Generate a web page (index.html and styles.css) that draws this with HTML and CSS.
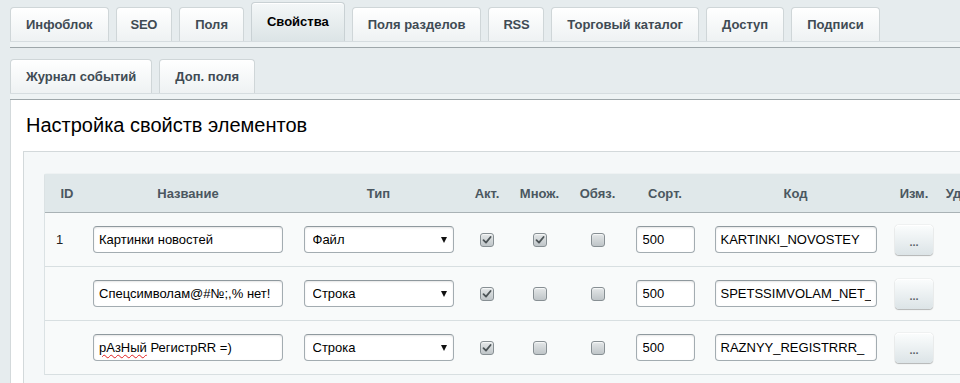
FILE: index.html
```html
<!DOCTYPE html>
<html lang="ru">
<head>
<meta charset="utf-8">
<title>Свойства</title>
<link rel="stylesheet" href="styles.css">
</head>
<body>
<div class="tabs tabs-first">
  <div class="tab">Инфоблок</div>
  <div class="tab tab-caps">SEO</div>
  <div class="tab">Поля</div>
  <div class="tab active">Свойства</div>
  <div class="tab">Поля разделов</div>
  <div class="tab tab-caps">RSS</div>
  <div class="tab">Торговый каталог</div>
  <div class="tab">Доступ</div>
  <div class="tab">Подписи</div>
</div>
<div class="tabs-band"></div>
<div class="tabs tabs-second">
  <div class="tab">Журнал событий</div>
  <div class="tab">Доп. поля</div>
</div>
<div class="tabs-band"></div>
<div class="panel">
  <h1 class="title">Настройка свойств элементов</h1>
  <div class="box">
    <table class="props">
      <colgroup>
        <col class="c-id"><col class="c-name"><col class="c-type"><col class="c-act"><col class="c-mult"><col class="c-req"><col class="c-sort"><col class="c-code"><col class="c-edit"><col class="c-del">
      </colgroup>
      <thead>
        <tr><th class="th-id">ID</th><th>Название</th><th>Тип</th><th>Акт.</th><th>Множ.</th><th>Обяз.</th><th>Сорт.</th><th>Код</th><th>Изм.</th><th>Удал.</th></tr>
      </thead>
      <tbody>
        <tr>
          <td class="td-id">1</td>
          <td><input class="inp inp-name" type="text" value="Картинки новостей"></td>
          <td><span class="sel-wrap"><select class="sel"><option>Файл</option></select></span></td>
          <td><span class="cb"><svg viewBox="0 0 14 14" width="14" height="14"><path d="M3.5 7.2 L6 9.6 L10.6 4" fill="none" stroke="#4d5457" stroke-width="1.8" stroke-linecap="round" stroke-linejoin="round"/></svg></span></td>
          <td><span class="cb"><svg viewBox="0 0 14 14" width="14" height="14"><path d="M3.5 7.2 L6 9.6 L10.6 4" fill="none" stroke="#4d5457" stroke-width="1.8" stroke-linecap="round" stroke-linejoin="round"/></svg></span></td>
          <td><span class="cb"></span></td>
          <td><input class="inp inp-sort" type="text" value="500"></td>
          <td><input class="inp inp-code" type="text" value="KARTINKI_NOVOSTEY"></td>
          <td><button class="btn" type="button">...</button></td>
          <td></td>
        </tr>
        <tr>
          <td class="td-id"></td>
          <td><input class="inp inp-name" type="text" value="Спецсимволам@#№;,% нет!"></td>
          <td><span class="sel-wrap"><select class="sel"><option>Строка</option></select></span></td>
          <td><span class="cb"><svg viewBox="0 0 14 14" width="14" height="14"><path d="M3.5 7.2 L6 9.6 L10.6 4" fill="none" stroke="#4d5457" stroke-width="1.8" stroke-linecap="round" stroke-linejoin="round"/></svg></span></td>
          <td><span class="cb"></span></td>
          <td><span class="cb"></span></td>
          <td><input class="inp inp-sort" type="text" value="500"></td>
          <td><input class="inp inp-code" type="text" value="SPETSSIMVOLAM_NET_"></td>
          <td><button class="btn" type="button">...</button></td>
          <td></td>
        </tr>
        <tr>
          <td class="td-id"></td>
          <td><span class="spell-wrap"><input class="inp inp-name" type="text" value="рАзНый РегистрRR =)"><span class="spell">рАзНый</span></span></td>
          <td><span class="sel-wrap"><select class="sel"><option>Строка</option></select></span></td>
          <td><span class="cb"><svg viewBox="0 0 14 14" width="14" height="14"><path d="M3.5 7.2 L6 9.6 L10.6 4" fill="none" stroke="#4d5457" stroke-width="1.8" stroke-linecap="round" stroke-linejoin="round"/></svg></span></td>
          <td><span class="cb"></span></td>
          <td><span class="cb"></span></td>
          <td><input class="inp inp-sort" type="text" value="500"></td>
          <td><input class="inp inp-code" type="text" value="RAZNYY_REGISTRRR_"></td>
          <td><button class="btn" type="button">...</button></td>
          <td></td>
        </tr>
      </tbody>
    </table>
  </div>
</div>
</body>
</html>
```

FILE: styles.css
```css
html {
  overflow: hidden;
}

body {
  margin: 0;
  width: 1200px;
  background: #e6ecee;
  font-family: "Liberation Sans", Arial, sans-serif;
  font-size: 13px;
  color: #000;
}

.tabs {
  display: flex;
  align-items: flex-end;
  gap: 7px;
  padding-left: 10px;
}

.tabs-first {
  height: 39px;
  padding-top: 2px;
}

.tabs-second {
  height: 34px;
  margin-top: 11px;
}

.tab {
  box-sizing: border-box;
  height: 34px;
  line-height: 33px;
  padding: 0 15px;
  border: 1px solid #cfd6d8;
  border-bottom: none;
  border-radius: 4px 4px 0 0;
  background: linear-gradient(#ffffff, #eef2f3);
  box-shadow: inset 0 1px 0 #fff;
  color: #3f4b54;
  font-weight: bold;
  font-size: 13px;
  white-space: nowrap;
}

.tab.tab-caps {
  padding: 0 14px;
  letter-spacing: -0.3px;
}

.tab.active {
  height: 39px;
  line-height: 37px;
  color: #000;
  background: linear-gradient(#f4f7f8, #dce4e6);
  border-color: #c9d1d4;
}

.tabs-band {
  margin-left: 10px;
  height: 5px;
  background: #eef3f4;
  border-top: 1px solid #d6dde0;
  border-bottom: 1px solid #9ea7aa;
}

.panel {
  margin-left: 10px;
  height: 400px;
  background: #fff;
  border-left: 1px solid #d3d9db;
  padding: 14px 0 0 12px;
}

.title {
  margin: 0 0 14px 3px;
  font-size: 20px;
  font-weight: normal;
  line-height: 23px;
  color: #000;
}

.box {
  border: 1px solid #d3d9db;
  background: #f5f8f9;
  padding: 21px 0 0 20px;
  height: 300px;
}

.props {
  border-collapse: separate;
  border-spacing: 0;
  table-layout: fixed;
  width: 941px;
  border-left: 1px solid #dbe2e4;
  border-top: 1px solid #eef2f3;
  border-radius: 3px 0 0 0;
}

.c-id { width: 38px; }
.c-name { width: 210px; }
.c-type { width: 171px; }
.c-act { width: 46px; }
.c-mult { width: 59px; }
.c-req { width: 57px; }
.c-sort { width: 78px; }
.c-code { width: 183px; }
.c-edit { width: 54px; }
.c-del { width: 44px; }

.props th {
  height: 38px;
  padding: 0;
  background: #e0e8ea;
  border-bottom: 1px solid #a9b2b5;
  color: #4b5760;
  font-weight: bold;
  font-size: 13px;
  text-align: center;
  white-space: nowrap;
}

.props th.th-id {
  padding-left: 6px;
}

.props td {
  height: 53px;
  padding: 0;
  background: #f8fafa;
  border-bottom: 1px solid #d8dfe1;
  text-align: center;
  vertical-align: middle;
}

.props td.td-id {
  text-align: left;
  padding-left: 11px;
  color: #222;
}

.inp {
  box-sizing: border-box;
  height: 27px;
  margin: 0;
  padding: 0 5px;
  border: 1px solid #a3acb1;
  border-top-color: #8f999e;
  border-radius: 4px;
  background: #fff;
  box-shadow: inset 0 1px 2px rgba(0, 0, 0, 0.1);
  font-family: "Liberation Sans", Arial, sans-serif;
  font-size: 13px;
  color: #000;
  vertical-align: middle;
  outline: none;
}

.inp-name { width: 190px; }
.inp-sort { width: 59px; padding-left: 6px; }
.inp-code { width: 162px; }

.spell-wrap {
  position: relative;
  display: inline-block;
  vertical-align: middle;
}

.spell {
  position: absolute;
  left: 6px;
  top: 0;
  height: 27px;
  line-height: 27px;
  font-size: 13px;
  color: transparent;
  text-decoration: underline wavy #e02020;
  text-decoration-thickness: 1px;
  text-underline-offset: 2px;
  pointer-events: none;
  white-space: nowrap;
}

.sel-wrap {
  position: relative;
  display: inline-block;
  vertical-align: middle;
}

.sel-wrap::after {
  content: "";
  position: absolute;
  right: 7px;
  top: 11px;
  border-style: solid;
  border-width: 6px 3.5px 0 3.5px;
  border-color: #111 transparent transparent transparent;
  pointer-events: none;
}

.sel {
  box-sizing: border-box;
  width: 150px;
  height: 27px;
  margin: 0;
  padding: 0 20px 0 8px;
  border: 1px solid #a3acb1;
  border-top-color: #8f999e;
  border-radius: 4px;
  background: #fff;
  box-shadow: inset 0 1px 2px rgba(0, 0, 0, 0.1);
  font-family: "Liberation Sans", Arial, sans-serif;
  font-size: 13px;
  color: #000;
  -webkit-appearance: none;
  appearance: none;
  vertical-align: middle;
}

.cb {
  box-sizing: border-box;
  display: inline-block;
  width: 14px;
  height: 14px;
  border: 1px solid #878f93;
  border-radius: 3px;
  background: linear-gradient(#e4e7e8, #bfc5c8);
  box-shadow: inset 0 1px 1px rgba(255, 255, 255, 0.7);
  vertical-align: middle;
  position: relative;
}

.cb svg {
  position: absolute;
  left: -1px;
  top: -1px;
  display: block;
}

.btn {
  box-sizing: border-box;
  width: 38px;
  height: 30px;
  margin: 0;
  padding: 4px 0 0;
  border: none;
  border-radius: 4px;
  background: linear-gradient(#fbfdfd, #dce4e7);
  box-shadow: 0 0 1px rgba(0, 0, 0, 0.35), 0 1px 1px rgba(0, 0, 0, 0.25), inset 0 1px 0 #fff;
  font-family: "Liberation Sans", Arial, sans-serif;
  font-size: 11px;
  font-weight: bold;
  color: #5a6368;
  vertical-align: middle;
}
```
